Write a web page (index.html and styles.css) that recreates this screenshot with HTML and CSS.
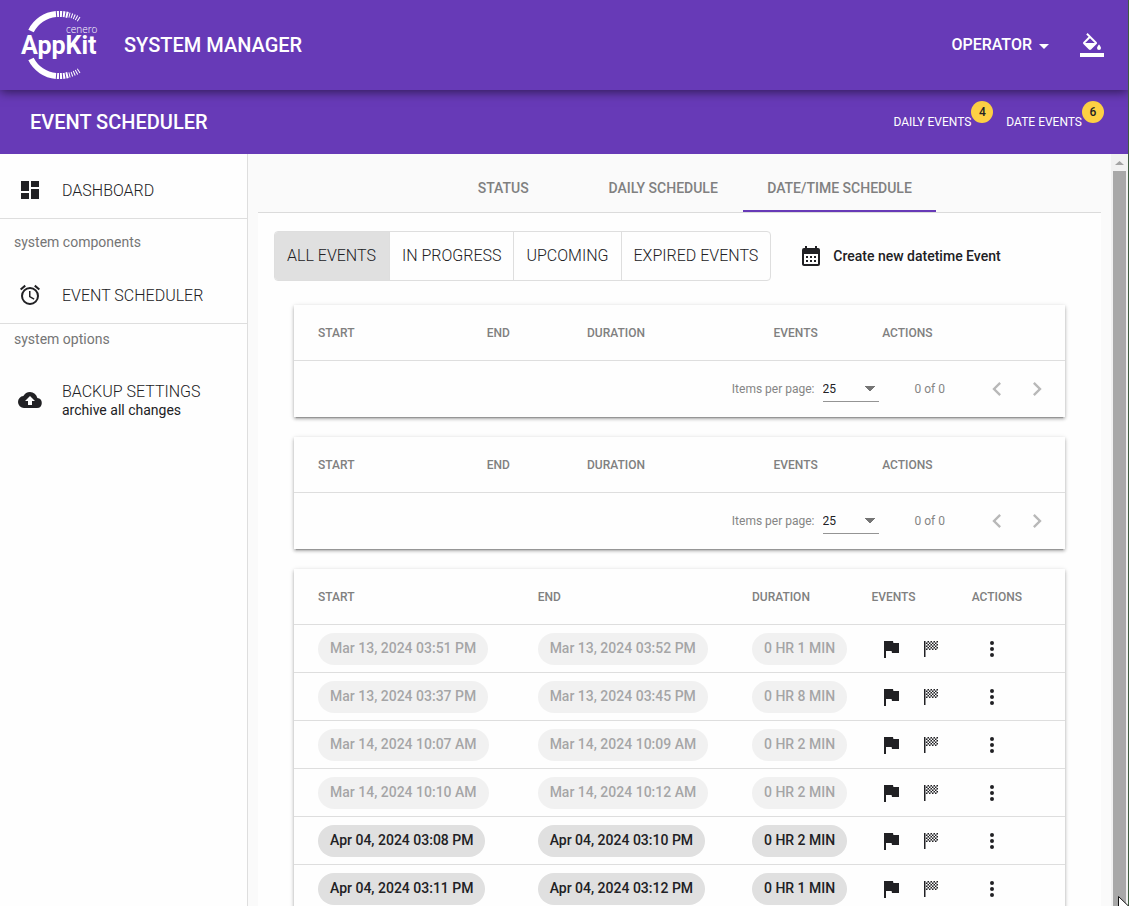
FILE: index.html
```html
<!DOCTYPE html>
<html lang="en">
<head>
<meta charset="utf-8">
<title>System Manager</title>
<link rel="stylesheet" href="styles.css">
</head>
<body>
<svg class="sprite" aria-hidden="true">
  <symbol id="flag" viewBox="0 0 24 24"><path d="M14.4 6 14 4H5v17h2v-7h5.600l.4 2h7V6z"/></symbol>
  <symbol id="goal" viewBox="0 0 24 24"><path transform="translate(1 0)" d="M4 4h1.500v16H4zM7.500 4h1.500v1.500H7.500zM10.500 4h1.500v1.500h-1.500zM13.500 4h1.500v1.500h-1.500zM16.500 4h1.500v1.500h-1.500zM6 5.500h1.500V7H6zM9 5.500h1.500V7H9zM12 5.500h1.500V7H12zM15 5.500h1.500V7H15zM7.500 7h1.500v1.500H7.500zM10.500 7h1.500v1.500h-1.500zM13.500 7h1.500v1.500h-1.500zM16.500 7h1.500v1.500h-1.500zM6 8.500h1.500V10H6zM9 8.500h1.500V10H9zM12 8.500h1.500V10H12zM15 8.500h1.500V10H15zM7.500 10h1.500v1.500H7.500zM10.500 10h1.500v1.500h-1.500zM13.500 10h1.500v1.500h-1.500zM16.500 10h1.500v1.500h-1.500zM6 11.500h1.500V13H6zM9 11.500h1.500V13H9zM12 11.500h1.500V13H12zM15 11.500h1.500V13H15z"/></symbol>
  <symbol id="more" viewBox="0 0 24 24"><path d="M12 8a2 2 0 1 0 0-4 2 2 0 0 0 0 4zm0 2a2 2 0 1 0 0 4 2 2 0 0 0 0-4zm0 6a2 2 0 1 0 0 4 2 2 0 0 0 0-4z"/></symbol>
  <symbol id="prev" viewBox="0 0 24 24"><path d="M15.410 7.410 14 6l-6 6 6 6 1.410-1.410L10.830 12z"/></symbol>
  <symbol id="next" viewBox="0 0 24 24"><path d="M10 6 8.590 7.410 13.170 12l-4.580 4.590L10 18l6-6z"/></symbol>
</svg>

<header class="topbar">
  <svg class="logo" viewBox="0 1 80 72" role="img" aria-label="cenero AppKit">
    <g fill="none" stroke="#fff">
      <path d="M11 23A31 31 0 0 1 36 6" stroke-width="6"/>
      <path d="M37 6A31 31 0 0 1 48 7" stroke-width="6" stroke-dasharray="2 1"/>
      <path d="M49 7A31 31 0 0 1 60 12" stroke-width="5" stroke-dasharray="1 1.500"/>
      <path d="M11 51A31 31 0 0 0 36 68" stroke-width="6"/>
      <path d="M37 68A31 31 0 0 0 48 67" stroke-width="6" stroke-dasharray="2 1"/>
      <path d="M49 67A31 31 0 0 0 60 62" stroke-width="5" stroke-dasharray="1 1.500"/>
    </g>
    <text class="logo-small" x="46" y="25">cenero</text>
    <text class="logo-name" x="1" y="46">AppKit</text>
  </svg>
  <h1 class="title">SYSTEM MANAGER</h1>
  <button class="operator" type="button">OPERATOR
    <svg class="caret" viewBox="0 0 10 5"><path d="M0 0h10L5 5z"/></svg>
  </button>
  <button class="fill-button" type="button" aria-label="Theme colour">
    <svg class="icon" viewBox="0 0 24 24"><path d="M16.560 8.940 7.620 0 6.210 1.410l2.380 2.380-5.150 5.150a1.490 1.490 0 0 0 0 2.120l5.500 5.500c.29.29.68.44 1.060.44s.77-.15 1.060-.44l5.500-5.500c.59-.58.59-1.530 0-2.120zM5.210 10 10 5.210 14.790 10zM19 11.500s-2 2.170-2 3.500a2 2 0 0 0 4 0c0-1.330-2-3.500-2-3.500zM0 20h24v4H0z"/></svg>
  </button>
</header>

<div class="subbar">
  <h2 class="title">EVENT SCHEDULER</h2>
  <div class="counter">DAILY EVENTS<span class="badge">4</span></div>
  <div class="counter">DATE EVENTS<span class="badge">6</span></div>
</div>

<div class="layout">
  <nav class="sidebar">
    <a class="nav-item" href="#dashboard">
      <svg class="icon" viewBox="0 0 24 24"><path d="M3 13h8V3H3zm0 8h8v-6H3zm10 0h8V11h-8zm0-18v6h8V3z"/></svg>
      <span class="nav-label">DASHBOARD</span>
    </a>
    <section class="nav-group">
      <h3 class="nav-heading">system components</h3>
      <a class="nav-item" href="#scheduler">
        <svg class="icon" viewBox="0 0 24 24"><path d="m22 5.720-4.600-3.860-1.290 1.530 4.600 3.860zM7.880 3.390 6.600 1.860 2 5.710l1.290 1.530zM12.500 8H11v6l4.750 2.850.75-1.230-4-2.370zM12 4a9 9 0 1 0 0 18 9 9 0 0 0 0-18zm0 16a7 7 0 1 1 0-14 7 7 0 0 1 0 14z"/></svg>
        <span class="nav-label">EVENT SCHEDULER</span>
      </a>
    </section>
    <section class="nav-group options">
      <h3 class="nav-heading">system options</h3>
      <a class="nav-item" href="#backup">
        <svg class="icon" viewBox="0 0 24 24"><path d="M19.350 10.040A7.490 7.490 0 0 0 12 4C9.110 4 6.600 5.640 5.350 8.040A5.994 5.994 0 0 0 0 14a6 6 0 0 0 6 6h13a5 5 0 0 0 .35-9.960zM14 13v4h-4v-4H7l5-5 5 5z"/></svg>
        <span>BACKUP SETTINGS<small>archive all changes</small></span>
      </a>
    </section>
  </nav>

  <main class="content">
    <div class="tabs" role="tablist">
      <button class="tab" role="tab" type="button">STATUS</button>
      <button class="tab" role="tab" type="button">DAILY SCHEDULE</button>
      <button class="tab active" role="tab" type="button" aria-selected="true">DATE/TIME SCHEDULE</button>
    </div>
    <div class="panel">
      <div class="toolbar">
        <div class="toggle-group">
          <button class="toggle checked" type="button" aria-pressed="true">ALL EVENTS</button>
          <button class="toggle" type="button">IN PROGRESS</button>
          <button class="toggle" type="button">UPCOMING</button>
          <button class="toggle" type="button">EXPIRED EVENTS</button>
        </div>
        <button class="create" type="button">
          <svg class="icon" viewBox="0 0 24 24"><path fill-rule="evenodd" d="M19 4h-1V2h-2v2H8V2H6v2H5a2 2 0 0 0-2 2v14c0 1.100.9 2 2 2h14a2 2 0 0 0 2-2V6a2 2 0 0 0-2-2zm0 16H5V10h14zM7 12h2v2H7zM11 12h2v2h-2zM15 12h2v2h-2zM7 16h2v2H7zM11 16h2v2h-2zM15 16h2v2h-2z"/></svg>
          Create new datetime Event
        </button>
      </div>

      <div class="card">
        <table class="events empty">
          <thead><tr><th>START</th><th>END</th><th>DURATION</th><th>EVENTS</th><th>ACTIONS</th></tr></thead>
        </table>
        <div class="paginator">
          <label for="size-a">Items per page:</label>
          <select class="page-size" id="size-a"><option>25</option></select>
          <span class="range">0 of 0</span>
          <button class="icon-button" type="button" disabled aria-label="Previous page"><svg class="icon"><use href="#prev"/></svg></button>
          <button class="icon-button" type="button" disabled aria-label="Next page"><svg class="icon"><use href="#next"/></svg></button>
        </div>
      </div>

      <div class="card">
        <table class="events empty">
          <thead><tr><th>START</th><th>END</th><th>DURATION</th><th>EVENTS</th><th>ACTIONS</th></tr></thead>
        </table>
        <div class="paginator">
          <label for="size-b">Items per page:</label>
          <select class="page-size" id="size-b"><option>25</option></select>
          <span class="range">0 of 0</span>
          <button class="icon-button" type="button" disabled aria-label="Previous page"><svg class="icon"><use href="#prev"/></svg></button>
          <button class="icon-button" type="button" disabled aria-label="Next page"><svg class="icon"><use href="#next"/></svg></button>
        </div>
      </div>

      <div class="card">
        <table class="events filled">
          <thead><tr><th>START</th><th>END</th><th>DURATION</th><th>EVENTS</th><th>ACTIONS</th></tr></thead>
          <tbody id="rows"></tbody>
        </table>
      </div>
    </div>
  </main>
  <div class="scrollbar" aria-hidden="true">
    <svg class="scroll-arrow" viewBox="0 0 17 17"><path d="M4 11h9L8.500 7z"/></svg>
    <div class="thumb"></div>
  </div>
</div>
<svg class="cursor" viewBox="0 0 12 19" aria-hidden="true"><path d="M.5.500v16l4-4 2.500 6 2.500-1-2.500-6H12z" fill="#fff" stroke="#111"/></svg>
<script src="rows.js"></script>
</body>
</html>
```

FILE: styles.css
```css
* { box-sizing: border-box; }

body {
  margin: 0;
  height: 100vh;
  display: flex;
  flex-direction: column;
  overflow: hidden;
  border-right: 1px solid #3f5c3f;
  background: #fefefe;
  color: #212124;
  font: 400 14px/20px Roboto, "Liberation Sans", sans-serif;
}

button, select {
  margin: 0;
  padding: 0;
  border: 0;
  background: none;
  color: inherit;
  font: inherit;
}

a { color: inherit; text-decoration: none; }
h1, h2, h3 { margin: 0; }
.sprite { display: none; }
.icon { width: 24px; height: 24px; flex: none; display: block; fill: currentColor; }

.topbar {
  position: relative;
  z-index: 1;
  flex: none;
  display: flex;
  align-items: center;
  height: 90px;
  padding: 0 24px 0 20px;
  background: #673ab7;
  color: #fff;
  box-shadow: 0 2px 10px rgba(0, 0, 0, .55);
}
.logo { width: 80px; height: 72px; margin-right: 24px; fill: #fff; }
.logo-small { font: 300 10px "Open Sans", sans-serif; }
.logo-name { font: 700 25px Roboto, sans-serif; }
.title { flex: 1; font-size: 20px; line-height: 24px; font-weight: 500; }
.operator { display: flex; align-items: center; gap: 7px; margin-right: 31px; font-size: 16px; font-weight: 500; }
.caret { width: 10px; height: 5px; margin-top: 3px; fill: #fff; }

.subbar {
  flex: none;
  display: flex;
  align-items: center;
  gap: 35px;
  height: 64px;
  padding: 0 46px 0 30px;
  background: #673ab7;
  color: #fff;
}
.counter { position: relative; font-size: 12px; }
.badge {
  position: absolute;
  left: 100%;
  bottom: 9px;
  width: 22px;
  height: 22px;
  border-radius: 50%;
  background: #fdd044;
  color: #212124;
  font-weight: 500;
  line-height: 22px;
  text-align: center;
}

.layout { flex: 1; min-height: 0; display: flex; }

.sidebar { flex: none; width: 248px; border-right: 1px solid #dedede; }
.nav-item {
  display: flex;
  align-items: center;
  gap: 20px;
  height: 56px;
  padding: 0 18px;
  font-size: 16px;
  font-weight: 300;
}
.nav-label { padding-top: 2px; }
.nav-item small { display: block; font-size: 14px; line-height: 16px; font-weight: 400; }
.sidebar > .nav-item { height: 65px; padding-top: 8px; border-bottom: 1px solid #dedede; }
.nav-group { padding-top: 13px; border-bottom: 1px solid #dedede; }
.nav-group .nav-item { margin-top: 15px; }
.nav-heading { padding-left: 14px; font-size: 14px; line-height: 20px; font-weight: 400; color: #757575; }
.nav-group.options { padding-top: 5px; border-bottom: 0; }
.options .nav-item { height: 72px; }

.content { flex: 1; min-width: 0; padding: 10px 10px 0; background: #fafafa; overflow: hidden; }
.tabs { display: flex; justify-content: center; height: 49px; border-bottom: 1px solid #dbdbdb; }
.tab {
  min-width: 160px;
  height: 48px;
  padding: 2px 24px 0;
  border-bottom: 2px solid transparent;
  font-weight: 500;
  color: #808080;
}
.tab.active { border-bottom-color: #673ab7; }

.panel { padding: 18px 16px; background: #fefefe; }
.toolbar { display: flex; align-items: center; gap: 28px; margin-bottom: 24px; }
.toggle-group { display: flex; border: 1px solid #dedede; border-radius: 4px; overflow: hidden; }
.toggle { height: 48px; padding: 0 12px; font-size: 16px; font-weight: 300; }
.toggle + .toggle { border-left: 1px solid #dedede; }
.toggle.checked { padding-right: 13px; background: #e0e0e0; }
.create { display: flex; align-items: center; gap: 10px; font-weight: 500; }

.card {
  margin: 0 20px 20px;
  background: #fefefe;
  box-shadow: 0 3px 1px -2px rgba(0, 0, 0, .2), 0 2px 3px rgba(0, 0, 0, .24), 0 1px 5px rgba(0, 0, 0, .14);
}
.events { width: 100%; table-layout: fixed; border-collapse: separate; border-spacing: 0; }
.events th, .events td { padding: 0; border-bottom: 1px solid #dedede; text-align: left; }
.events th { height: 56px; font-size: 12px; font-weight: 500; color: #808080; }
.events td { height: 48px; }
.events th:first-child, .events td:first-child { padding-left: 24px; }
.empty th:nth-child(1) { width: 25%; }
.empty th:nth-child(2) { width: 13%; }
.empty th:nth-child(3) { width: 24.200%; }
.empty th:nth-child(4) { width: 14.100%; }
.filled th:nth-child(1) { width: 31.600%; }
.filled th:nth-child(2) { width: 27.800%; }
.filled th:nth-child(3) { width: 15.500%; }
.filled th:nth-child(4) { width: 13%; }

.chip {
  display: inline-block;
  height: 32px;
  padding: 0 12px;
  border-radius: 16px;
  background: #e0e0e0;
  line-height: 30px;
  font-weight: 500;
  white-space: nowrap;
  vertical-align: middle;
}
.past .chip { opacity: .4; }
.icon-row { display: flex; }
.icon-button { display: grid; place-items: center; width: 40px; height: 40px; }
.icon-button:disabled { color: #b8b8b8; }
.paginator .icon { width: 28px; height: 28px; }

.paginator {
  display: flex;
  align-items: center;
  height: 56px;
  padding-right: 8px;
  justify-content: flex-end;
  font-size: 12px;
  color: #858585;
}
.page-size {
  appearance: none;
  width: 56px;
  height: 26px;
  margin: 0 36px 0 8px;
  border-bottom: 1px solid #949494;
  border-radius: 0;
  color: #212124;
  background: conic-gradient(from -45deg at 50% 100%, #757575 90deg, transparent 0) right 4px center / 10px 5px no-repeat;
  background: conic-gradient(from -45deg at 50% 100%, transparent 90deg, transparent 0), linear-gradient(to bottom right, #757575 50%, transparent 51%) right 4px center / 5px 5px no-repeat, linear-gradient(to bottom left, #757575 50%, transparent 51%) right 9px center / 5px 5px no-repeat;
}
.range { margin-right: 32px; }

.scrollbar { flex: none; display: flex; flex-direction: column; width: 17px; background: #f1f1f1; }
.scroll-arrow { width: 17px; height: 17px; flex: none; fill: #a3a3a3; }
.thumb { flex: 1; margin: 0 2px; background: #a8a8a8; }
.cursor { position: absolute; right: -1px; bottom: -9px; z-index: 2; width: 12px; height: 19px; }
```

FILE: rows.js
```js
const events = [
  ["Mar 13, 2024 03:51 PM", "Mar 13, 2024 03:52 PM", "0 HR 1 MIN", true],
  ["Mar 13, 2024 03:37 PM", "Mar 13, 2024 03:45 PM", "0 HR 8 MIN", true],
  ["Mar 14, 2024 10:07 AM", "Mar 14, 2024 10:09 AM", "0 HR 2 MIN", true],
  ["Mar 14, 2024 10:10 AM", "Mar 14, 2024 10:12 AM", "0 HR 2 MIN", true],
  ["Apr 04, 2024 03:08 PM", "Apr 04, 2024 03:10 PM", "0 HR 2 MIN", false],
  ["Apr 04, 2024 03:11 PM", "Apr 04, 2024 03:12 PM", "0 HR 1 MIN", false]
];
const button = (icon, label) =>
  `<button class="icon-button" type="button" aria-label="${label}"><svg class="icon"><use href="#${icon}"/></svg></button>`;

document.getElementById("rows").innerHTML = events.map(([start, end, duration, past]) => `
  <tr class="${past ? "past" : ""}">
    <td><span class="chip">${start}</span></td>
    <td><span class="chip">${end}</span></td>
    <td><span class="chip">${duration}</span></td>
    <td><div class="icon-row">${button("flag", "Start event")}${button("goal", "End event")}</div></td>
    <td>${button("more", "More actions")}</td>
  </tr>`).join("");
```
